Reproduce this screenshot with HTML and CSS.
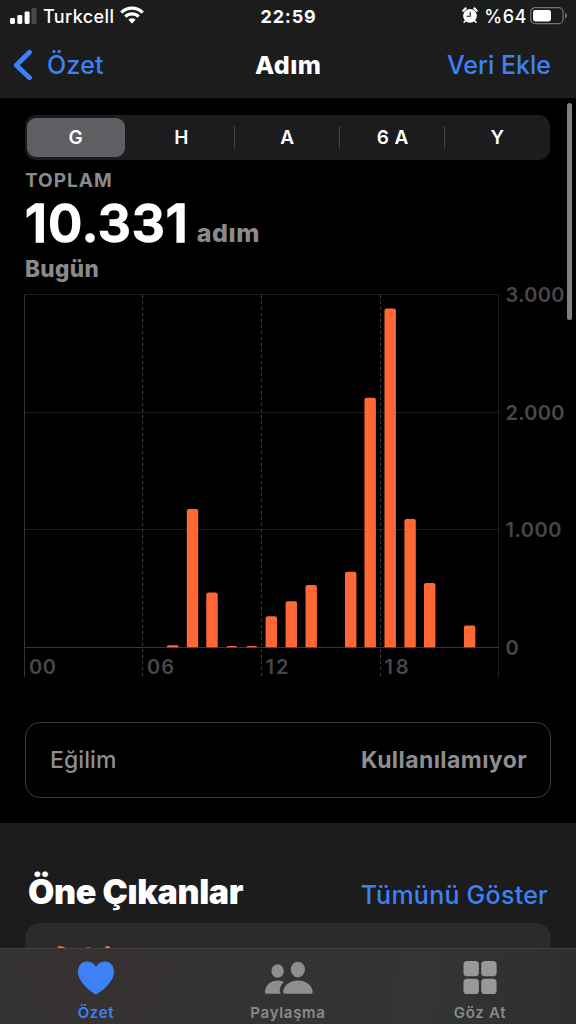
FILE: index.html
```html
<!DOCTYPE html>
<html lang="tr">
<head>
<meta charset="utf-8">
<title>Adım</title>
<link rel="stylesheet" href="styles.css">
</head>
<body>
<header class="top">
  <div class="status">
    <div class="status-left">
      <svg class="signal" width="27" height="16" viewBox="0 0 27 16" fill="#fff"><rect x="0" y="10" width="5" height="6" rx="1.4"/><rect x="7.3" y="7" width="5" height="9" rx="1.4"/><rect x="14.6" y="3.5" width="5" height="12.5" rx="1.4"/><rect x="21.5" y="0" width="5" height="16" rx="1.4" fill="#48484a"/></svg>
      <span class="carrier">Turkcell</span>
      <svg class="wifi" width="24" height="18" viewBox="0 0 24 18" fill="none" stroke="#fff" stroke-width="3.2"><path d="M1.3 6.6a15.2 15.2 0 0 1 21.4 0"/><path d="M5.3 10.7a9.5 9.5 0 0 1 13.4 0"/><path d="M12 17.4l-3.6-3.6a5.1 5.1 0 0 1 7.2 0z" fill="#fff" stroke="none"/></svg>
    </div>
    <span class="clock">22:59</span>
    <div class="status-right">
      <svg class="alarm" width="16" height="17" viewBox="0 0 16 17"><circle cx="8" cy="8.8" r="6.9" fill="#fff"/><path d="M1.3 3.7L3.6 1.4M14.7 3.7L12.4 1.4" stroke="#fff" stroke-width="2.2" stroke-linecap="round"/><path d="M3.6 13.4l-1.5 1.8M12.4 13.4l1.5 1.8" stroke="#fff" stroke-width="1.6" stroke-linecap="round"/><path d="M8.2 4.8v4.5H4.4" fill="none" stroke="#1c1c1d" stroke-width="1.1"/></svg>
      <span class="percent">%64</span>
      <svg class="battery" width="38" height="18" viewBox="0 0 38 18"><rect x=".7" y=".7" width="32.4" height="16" rx="4.5" fill="none" stroke="#747476" stroke-width="1.2"/><rect x="3" y="3" width="18" height="11.4" rx="2.3" fill="#fff"/><path d="M35 6q2 .7 2 2.8t-2 2.8z" fill="#747476"/></svg>
    </div>
  </div>
  <nav class="nav">
    <a class="back"><svg width="20" height="32" viewBox="0 0 20 32"><path d="M16.5 3.3L3.3 16.2l13.2 12.6" fill="none" stroke="#3c82f6" stroke-width="4.8" stroke-linecap="round" stroke-linejoin="round"/></svg><span>Özet</span></a>
    <h1 class="title">Adım</h1>
    <a class="add">Veri Ekle</a>
  </nav>
</header>
<main class="content">
  <div class="scrollbar"></div>
  <div class="segments">
    <span class="segment selected">G</span><span class="segment">H</span><span class="segment divided">A</span><span class="segment divided">6 A</span><span class="segment divided">Y</span>
  </div>
  <section class="summary">
    <div class="caption">TOPLAM</div>
    <div class="total"><span class="number">10.331</span><span class="unit">adım</span></div>
    <div class="day">Bugün</div>
  </section>
  <svg class="chart" width="576" height="400" viewBox="0 286 576 400">
    <g class="grid"><path d="M24.5 294.5H499M24.5 412.5H499M24.5 529.5H499"/><path d="M498.5 295V678"/></g>
    <path class="axis" d="M24.5 295V677M24.5 647.5H499"/>
    <path class="dashes" d="M142.5 295V676M261.5 295V676M380.5 295V676"/>
    <g class="bars">
      <path d="M167 647.3v-.6q0-1.4 1.6-1.4h8.4q1.6 0 1.6 1.4v.6z"/>
      <path d="M186.8 647.3V511q0-2 2-2h7.4q2 0 2 2v136.3z"/>
      <path d="M206.3 647.3V594.6q0-2 2-2h7.4q2 0 2 2v52.7z"/>
      <path d="M226.5 647.3q0-1.3 1.5-1.3h7.6q1.5 0 1.5 1.3z"/>
      <path d="M246.5 647.3q0-1.3 1.5-1.3h7.6q1.5 0 1.5 1.3z"/>
      <path d="M265.6 647.3V618.2q0-2 2-2h7.4q2 0 2 2v29.1z"/>
      <path d="M285.6 647.3V603.3q0-2 2-2h7.4q2 0 2 2v44z"/>
      <path d="M305.5 647.3V587q0-2 2-2h7.4q2 0 2 2v60.3z"/>
      <path d="M345 647.3V573.8q0-2 2-2h7.4q2 0 2 2v73.5z"/>
      <path d="M364.5 647.3V399.7q0-2 2-2h7.4q2 0 2 2v247.6z"/>
      <path d="M384.5 647.3V310.6q0-2 2-2h7.4q2 0 2 2v336.7z"/>
      <path d="M404.4 647.3V521q0-2 2-2h7.4q2 0 2 2v126.3z"/>
      <path d="M424 647.3V585q0-2 2-2h7.4q2 0 2 2v62.3z"/>
      <path d="M463.9 647.3V627.5q0-2 2-2h7.4q2 0 2 2v19.8z"/>
    </g>
    <g class="labels">
      <text x="505.5" y="302" textLength="59">3.000</text>
      <text x="505.5" y="419.5" textLength="59">2.000</text>
      <text x="505.5" y="537" textLength="56">1.000</text>
      <text x="505.5" y="655">0</text>
      <text x="29" y="674" textLength="27">00</text>
      <text x="147" y="674" textLength="27">06</text>
      <text x="265.5" y="674" textLength="23">12</text>
      <text x="384.5" y="674" textLength="24">18</text>
    </g>
  </svg>
  <div class="trend"><span class="trend-name">Eğilim</span><span class="trend-value">Kullanılamıyor</span></div>
  <section class="highlights">
    <div class="highlights-head"><h2>Öne Çıkanlar</h2><a class="all">Tümünü Göster</a></div>
    <div class="card"><svg width="60" height="4" viewBox="0 0 60 4" fill="#ff6735"><path d="M.5 1Q5 .5 8 2.500V4H2zM29 2.500h5V4h-5zM48 2q3-1.800 5 0V4h-5z"/></svg></div>
  </section>
</main>
<footer class="tabs">
  <a class="tab active"><svg width="38" height="35" viewBox="0 0 38 35" fill="#3c82f6"><path d="M19 34.5C15 32.5 1 23 1 11.5 1 5.5 5 1.5 10.2 1.5c4 0 7 2.2 8.8 5.5 1.8-3.3 4.8-5.5 8.8-5.5C33 1.5 37 5.5 37 11.5 37 23 23 32.5 19 34.5z"/></svg><span class="tab-ozet">Özet</span></a>
  <a class="tab"><svg width="50" height="35" viewBox="0 0 50 35" fill="#8e8e8f"><ellipse cx="14.6" cy="11" rx="6.2" ry="6.7"/><ellipse cx="34.9" cy="9.6" rx="7.1" ry="7.8"/><path d="M17.7 33.8H3.2Q1.8 33.8 2 31.4C2.7 25 8 20.6 14.6 20.6c2.4 0 4.6.6 6.4 1.5-3.5 3-5.5 7.5-3.3 11.7z"/><path d="M35 20.6c8.4 0 13.8 5 14.6 10.6q.3 2.6-1.8 2.6H22q-2.1 0-1.8-2.6C21 25.6 26.6 20.6 35 20.6z"/></svg><span class="tab-share">Paylaşma</span></a>
  <a class="tab"><svg width="34" height="35" viewBox="0 0 34 35" fill="#98989a"><rect x=".5" y="1" width="15.4" height="15.3" rx="3.6"/><rect x="18.2" y="1" width="15.4" height="15.3" rx="3.6"/><rect x=".5" y="18.7" width="15.4" height="15.3" rx="3.6"/><rect x="18.2" y="18.7" width="15.4" height="15.3" rx="3.6"/></svg><span class="tab-browse">Göz At</span></a>
</footer>
</body>
</html>
```

FILE: styles.css
```css
* { box-sizing: border-box; }
body {
  margin: 0;
  width: 576px;
  height: 1024px;
  overflow: hidden;
  display: flex;
  flex-direction: column;
  background: #000;
  color: #fff;
  font-family: Inter, "Liberation Sans", sans-serif;
}
svg { display: block; flex: none; }
span, a, h1, h2 { white-space: nowrap; }

.top { flex: none; height: 98px; background: #1c1c1d; }
.status, .nav { display: grid; grid-template-columns: 1fr auto 1fr; align-items: center; }
.status { height: 32px; padding: 0 8px 0 10px; font-size: 18px; font-weight: 500; }
.status-left, .status-right { display: flex; align-items: center; }
.status-right { justify-content: flex-end; }
.carrier { margin-left: 6px; letter-spacing: .4px; }
.wifi { margin-left: 6px; margin-top: -2px; }
.clock { margin-left: -1px; font-weight: 700; letter-spacing: .8px; }
.alarm { margin-right: 6px; margin-top: -1px; }
.percent { margin-right: 3px; letter-spacing: .6px; }
.nav { height: 66px; padding: 0 25px 0 13px; font-size: 25px; font-weight: 500; color: #3c82f6; grid-template-columns: 242px auto 1fr; }
.back { display: flex; align-items: center; gap: 14px; letter-spacing: .2px; }
.title { margin: 0; font-size: 25px; font-weight: 800; letter-spacing: .4px; color: #fff; }
.add { text-align: right; }

.content { position: relative; flex: 1; min-height: 0; overflow: hidden; }
.scrollbar { position: absolute; top: 5px; right: 4px; width: 5px; height: 217px; border-radius: 3px; background: #818181; }

.segments { display: grid; grid-template-columns: 103.5px repeat(4, 1fr); margin: 17px 26px 0 25px; height: 45px; padding: 3px 0 3px 2px; border-radius: 11px; background: #1c1c1e; }
.segment { position: relative; display: flex; align-items: center; justify-content: center; font-size: 19px; font-weight: 600; letter-spacing: .4px; }
.segment:nth-child(2) { padding-right: 3px; }
.segment:nth-child(3) { padding-right: 1px; }
.selected { margin-right: 6px; border-radius: 9px; background: #5e5e63; }
.divided::before { content: ""; position: absolute; left: -1px; top: 8px; width: 1px; height: 23px; background: #434345; }

.summary { height: 126px; padding: 8px 0 0 25px; color: #8a8a8c; }
.caption { height: 24px; line-height: 26px; font-size: 19px; font-weight: 700; letter-spacing: 1px; }
.total { display: flex; align-items: baseline; height: 64px; line-height: 64px; }
.number { font-size: 52px; font-weight: 600; letter-spacing: .9px; color: #fff; -webkit-text-stroke: 1.4px #fff; stroke-linejoin: round; }
.unit { margin-left: 8px; font-size: 25px; font-weight: 800; letter-spacing: .6px; }
.day { height: 26px; line-height: 25px; font-size: 22.5px; font-weight: 800; letter-spacing: .4px; }

.grid { fill: none; stroke: #1f1f20; }
.axis { fill: none; stroke: #363638; }
.dashes { fill: none; stroke: #3c3c3e; stroke-dasharray: 3 3; }
.bars { fill: #ff6735; }
.labels { fill: #48484a; font-size: 20px; font-weight: 600; }

.trend { display: flex; align-items: center; justify-content: space-between; height: 76px; margin: 36px 25px 25px; padding: 0 23px 0 24px; border: 1.5px solid #3a3a3c; border-radius: 15px; font-size: 23px; font-weight: 500; letter-spacing: .1px; color: #8e8e90; }
.trend-value { font-weight: 700; letter-spacing: .42px; }

.highlights { height: 125px; background: #1c1c1c; }
.highlights-head { display: flex; align-items: baseline; justify-content: space-between; height: 100px; padding: 48px 28px 0 28px; }
.highlights-head h2 { margin: 0; font-size: 34px; line-height: 42px; font-weight: 900; letter-spacing: -.35px; }
.all { font-size: 25px; font-weight: 500; letter-spacing: .25px; color: #3c82f6; }
.card { height: 60px; margin: 0 25px; padding: 22px 0 0 32px; border-radius: 15px; background: #2b2b2b; }

.tabs { flex: none; display: grid; grid-template-columns: repeat(3, 1fr); height: 76px; border-top: 1px solid #414142; background: radial-gradient(circle at 95px 5px, #383130 0, #333 120px, #333435 340px, #2d2e2f 100%); }
.tab { display: flex; flex-direction: column; align-items: center; padding-top: 11px; font-size: 15px; line-height: 18px; font-weight: 600; color: #8a8a8b; letter-spacing: .7px; }
.tab span { margin-top: 9px; }
.tab svg { margin-left: -1px; }
.tab.active { color: #3c82f6; }
```
